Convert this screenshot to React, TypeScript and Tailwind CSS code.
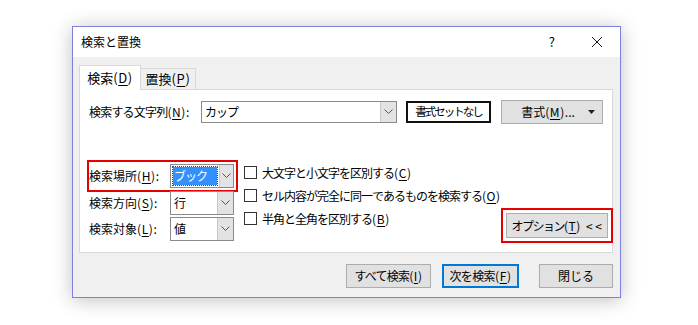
import { ReactNode } from "react";

const font = { fontFamily: '"Noto Sans CJK JP", "Noto Sans", sans-serif' };

// access key part keeps normal spacing, the japanese part can be tightened
const Acc = ({ k, children, tight = "" }: { k: string; children: ReactNode; tight?: string }) => (
  <span>
    <span className={tight}>{children}</span>
    <span className="tracking-[0.6px]">
      (<span className="underline underline-offset-2">{k}</span>)
    </span>
  </span>
);

const Chevron = () => (
  <svg width="9" height="6" viewBox="0 0 9 6" className="text-[#555]">
    <path d="M0.5 0.5 L4.5 4.5 L8.5 0.5" fill="none" stroke="currentColor" strokeWidth="1" />
  </svg>
);

const SelectBox = ({ value, selected }: { value: string; selected?: boolean }) => (
  <div className="flex h-[24px] w-[64px] border border-[#8a8a8a] bg-white">
    <div className="flex flex-1 items-center p-[2px]">
      {selected ? (
        <span className="flex h-full w-[44px] items-center bg-[#3390ff] pl-[1px] tracking-[-1px] text-white outline-1 outline-dotted outline-[#1c4ea0]">{value}</span>
      ) : (
        <span className="pl-[1px]">{value}</span>
      )}
    </div>
    <div className="flex w-[16px] items-center justify-center border-l border-[#c8c8c8] bg-[#e3e3e3]">
      <Chevron />
    </div>
  </div>
);

const Checkbox = ({ k, children }: { k: string; children: ReactNode }) => (
  <div className="flex h-[23px] items-center gap-[5px]">
    <span className="h-[13px] w-[13px] border border-[#333] bg-white" />
    <Acc k={k} tight="tracking-[-1px]">
      {children}
    </Acc>
  </div>
);

const Button = ({ children, className = "" }: { children: ReactNode; className?: string }) => (
  <div className={`flex h-[24px] items-center justify-center border border-[#adadad] bg-[#e1e1e1] ${className}`}>{children}</div>
);

const FieldRow = ({ k, label, children, className = "" }: { k: string; label: string; children: ReactNode; className?: string }) => (
  <div className={`flex items-center ${className}`}>
    <span className="w-[81px]">
      <Acc k={k}>{label}</Acc>:
    </span>
    {children}
  </div>
);

export default function App() {
  return (
    <div className="h-[325px] w-[698px] whitespace-nowrap bg-white pl-[72px] pt-[26px] text-[12px] text-black" style={font}>
      <div className="flex h-[272px] w-[549px] flex-col border border-[#7f7fe0] bg-[#f0f0f0] shadow-[0_2px_18px_rgba(0,0,0,0.25)]">
        <div className="flex h-[30px] items-center bg-white pl-[8px]">
          <span>検索と置換</span>
          <span className="ml-auto mr-[36px] text-[13px]">?</span>
          <svg width="12" height="12" viewBox="0 0 12 12" className="mr-[17px]">
            <path d="M1 1 L11 11 M11 1 L1 11" stroke="#111" strokeWidth="1" />
          </svg>
        </div>

        <div className="flex flex-1 flex-col px-[6px] pt-[8px]">
          <div className="flex items-end">
            <div className="relative z-10 -mb-px flex h-[25px] w-[62px] items-center justify-center border border-b-0 border-[#d9d9d9] bg-white text-[13px]">
              <Acc k="D">検索</Acc>
            </div>
            <div className="flex h-[21px] w-[55px] items-center justify-center border border-b-0 border-l-0 border-[#d9d9d9] bg-[#f0f0f0] text-[13px]">
              <Acc k="P">置換</Acc>
            </div>
          </div>

          <div className="flex h-[164px] w-[534px] flex-col border border-[#d9d9d9] bg-white pl-[7px] pr-[2px] pt-[10px]">
            <div className="flex items-center">
              <span className="w-[114px] pl-[2px]">
                <Acc k="N" tight="tracking-[-0.8px]">
                  検索する文字列
                </Acc>
                :
              </span>
              <div className="flex h-[22px] w-[196px] border border-[#8a8a8a]">
                <span className="flex flex-1 items-center pl-[3px] tracking-[-1px]">カップ</span>
                <div className="flex w-[16px] items-center justify-center border-l border-[#c8c8c8] bg-[#e3e3e3]">
                  <Chevron />
                </div>
              </div>
              <div className="ml-[9px] flex h-[22px] w-[85px] items-center justify-center border-2 border-[#111] bg-white text-[11.5px] tracking-[-2px]">
                書式セットなし
              </div>
              <Button className="relative ml-[10px] h-[22px] w-[102px]">
                <span className="-ml-[8px]">
                  <Acc k="M">書式</Acc>...
                </span>
                <svg width="7" height="4" viewBox="0 0 7 4" className="absolute right-[7px] top-[9px]">
                  <path d="M0 0 L7 0 L3.5 4 Z" fill="#222" />
                </svg>
              </Button>
            </div>

            <div className="mt-[36px] flex">
              <div className="flex flex-col">
                <div className="w-[151px] border-2 border-[#e60000] py-[2px]">
                  <FieldRow k="H" label="検索場所">
                    <SelectBox value="ブック" selected />
                  </FieldRow>
                </div>
                <FieldRow k="S" label="検索方向" className="mt-[-1px] pl-[2px]">
                  <SelectBox value="行" />
                </FieldRow>
                <FieldRow k="L" label="検索対象" className="mt-[2px] pl-[2px]">
                  <SelectBox value="値" />
                </FieldRow>
              </div>

              <div className="ml-[6px] flex flex-col pt-[1px]">
                <Checkbox k="C">大文字と小文字を区別する</Checkbox>
                <Checkbox k="O">セル内容が完全に同一であるものを検索する</Checkbox>
                <Checkbox k="B">半角と全角を区別する</Checkbox>
              </div>

              <div className="ml-auto flex flex-col justify-end">
                <div className="mb-[-2px] border-2 border-[#e60000] p-[3px]">
                  <Button className="h-[25px] w-[102px]">
                    <Acc k="T" tight="tracking-[-1.5px]">
                      オプション
                    </Acc>
                    <span className="ml-[5px]">&lt; &lt;</span>
                  </Button>
                </div>
              </div>
            </div>
          </div>

          <div className="mt-[11px] flex justify-end pr-[1px]">
            <Button className="w-[85px]">
              <Acc k="I" tight="tracking-[-0.8px]">
                すべて検索
              </Acc>
            </Button>
            <div className="ml-[11px] flex h-[24px] w-[77px] items-center justify-center border-2 border-[#0078d7] bg-[#e1e1e1]">
              <Acc k="F" tight="tracking-[-0.6px]">
                次を検索
              </Acc>
            </div>
            <Button className="ml-[20px] w-[74px]">閉じる</Button>
          </div>
        </div>
      </div>
    </div>
  );
}
